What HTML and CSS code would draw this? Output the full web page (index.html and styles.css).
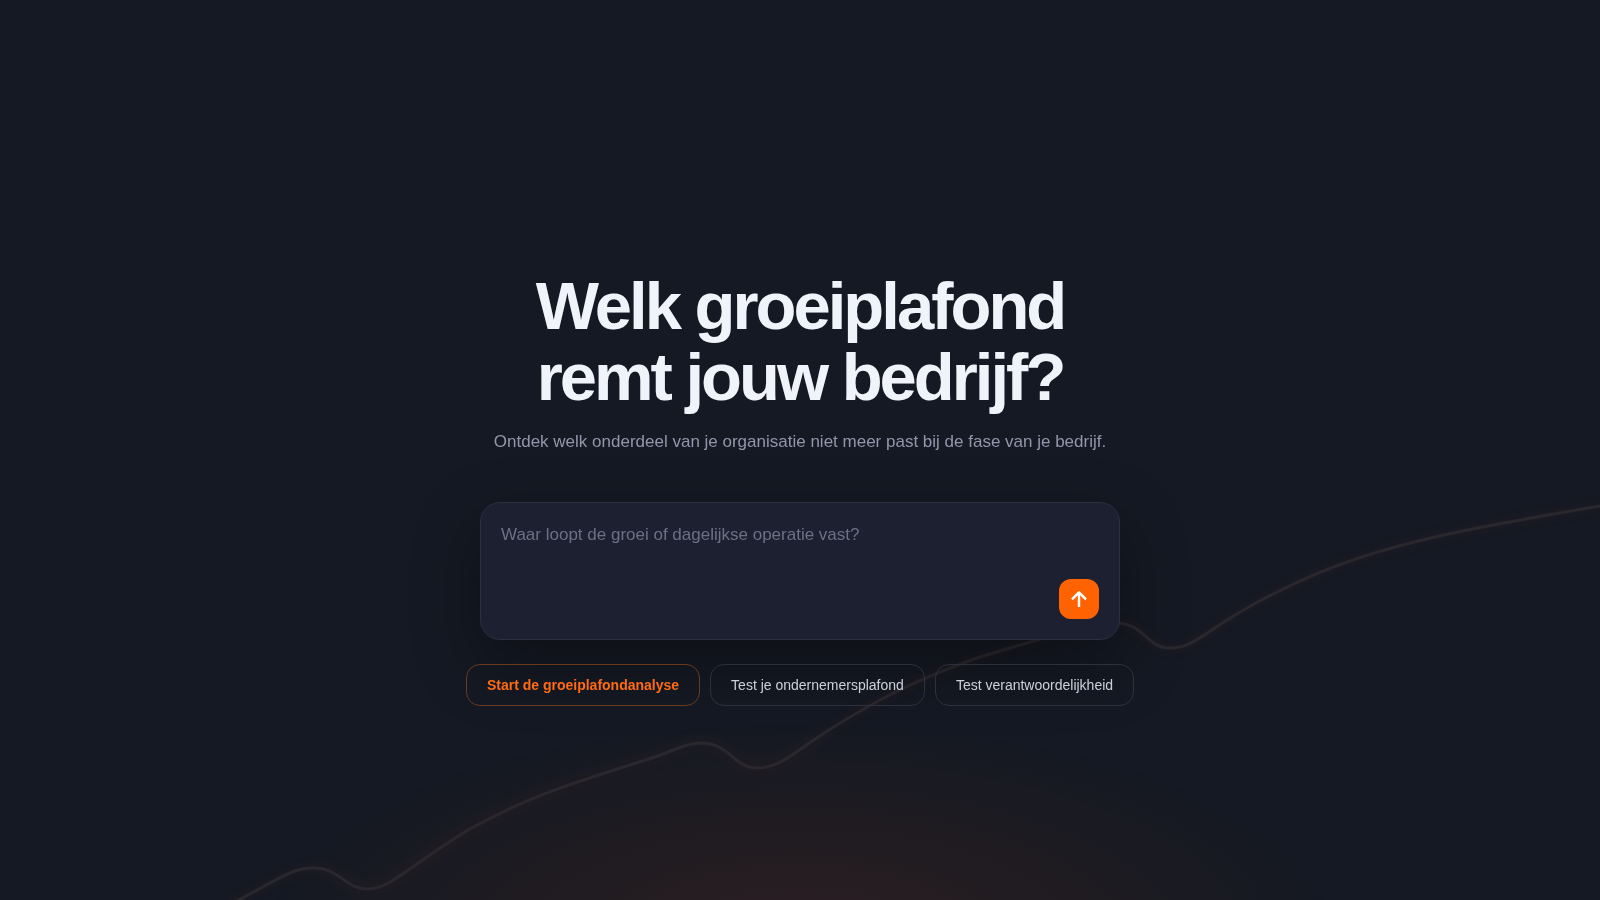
FILE: index.html
```
<!DOCTYPE html>
<html lang="nl">
<head>
	<meta charset="UTF-8">
	<meta name="viewport" content="width=device-width, initial-scale=1.0">
	<title>Welk groeiplafond remt jouw bedrijf?</title>
	<link rel="stylesheet" href="styles.css">
</head>
<body>
<div class="background" aria-hidden="true">
	<svg class="curve" viewBox="0 0 1600 900" preserveAspectRatio="xMidYMax slice">
		<path class="curve-glow" d="M206 918 L270 883 C292 871 300 868 314 868 C340 868 345 889 367 889 C390 889 402 871 468 830 C530 795 580 781 652 758 C676 750 686 743 701 743 C730 743 733 768 757 768 C781 768 792 753 832 728 C877 700 915 680 977 658 L1040 639 C1080 629 1100 623 1116 623 C1144 623 1146 648 1170 648 C1194 648 1204 632 1247 608 C1350 550 1430 535 1600 506"/>
		<path class="curve-line" d="M206 918 L270 883 C292 871 300 868 314 868 C340 868 345 889 367 889 C390 889 402 871 468 830 C530 795 580 781 652 758 C676 750 686 743 701 743 C730 743 733 768 757 768 C781 768 792 753 832 728 C877 700 915 680 977 658 L1040 639 C1080 629 1100 623 1116 623 C1144 623 1146 648 1170 648 C1194 648 1204 632 1247 608 C1350 550 1430 535 1600 506"/>
	</svg>
</div>
<main class="hero">
	<h1>Welk groeiplafond<br>remt jouw bedrijf?</h1>
	<p class="subtitle">Ontdek welk onderdeel van je organisatie niet meer past bij de fase van je bedrijf.</p>
	<form class="prompt">
		<textarea aria-label="Jouw vraag" placeholder="Waar loopt de groei of dagelijkse operatie vast?"></textarea>
		<button class="send" type="button" aria-label="Verstuur">
			<svg width="24" height="24" viewBox="0 0 24 24">
				<path d="M12 20V5.5M5 12.3l7-7 7 7"/>
			</svg>
		</button>
	</form>
	<div class="actions">
		<button class="pill primary" type="button">Start de groeiplafondanalyse</button>
		<button class="pill" type="button">Test je ondernemersplafond</button>
		<button class="pill" type="button">Test verantwoordelijkheid</button>
	</div>
</main>
</body>
</html>
```
FILE: styles.css
```
*{
	box-sizing:border-box;
}
body{
	margin:0;
	background-color:#151923;
	color:#f1f3fa;
	font-family:"Liberation Sans", Arial, sans-serif;
}
button, textarea{
	font-family:inherit;
}
.background{
	position:fixed;
	inset:0;
	z-index:-1;
	background:radial-gradient(ellipse 34% 24% at 50% 104%, rgba(255,70,30,0.1), rgba(255,98,0,0.05) 45%, transparent);
}
.curve{
	display:block;
	width:100%;
	height:100%;
	fill:none;
}
.curve-line{
	stroke:#2a282e;
	stroke-width:3;
}
.curve-glow{
	stroke:#ff6200;
	stroke-width:8;
	opacity:0.04;
	filter:blur(6px);
}
.hero{
	min-height:100vh;
	padding:76px 24px 0;
	display:flex;
	flex-direction:column;
	align-items:center;
	justify-content:center;
}
h1{
	margin:0 0 16px;
	font-size:67px;
	line-height:71px;
	letter-spacing:-3px;
	text-align:center;
}
.subtitle{
	margin:0 0 46px;
	color:#9097ab;
	font-size:17px;
	line-height:28px;
	text-align:center;
}
.prompt{
	width:100%;
	max-width:640px;
	margin-bottom:24px;
	padding:20px;
	display:flex;
	flex-direction:column;
	background-color:#1d2030;
	border:1px solid #2c303f;
	border-radius:20px;
	box-shadow:0 24px 64px rgba(0,0,0,0.35);
}
.prompt textarea{
	height:56px;
	padding:0;
	border:0;
	outline:0;
	resize:none;
	background:none;
	color:#f1f3fa;
	font-size:17px;
	line-height:24px;
}
.prompt textarea::placeholder{
	color:#6b7083;
}
.send{
	width:40px;
	height:40px;
	padding:0;
	align-self:flex-end;
	display:flex;
	align-items:center;
	justify-content:center;
	background-color:#ff6200;
	border:0;
	border-radius:12px;
}
.send svg{
	fill:none;
	stroke:#fff;
	stroke-width:2.4;
	stroke-linejoin:round;
}
.actions{
	display:flex;
	flex-wrap:wrap;
	justify-content:center;
	gap:10px;
}
.pill{
	height:42px;
	padding:0 20px;
	background:none;
	border:1px solid #2e313c;
	border-radius:14px;
	color:#cdd0da;
	font-size:14px;
}
.pill.primary{
	border-color:#6b3a1e;
	color:#ff6a13;
	font-weight:bold;
}
```
